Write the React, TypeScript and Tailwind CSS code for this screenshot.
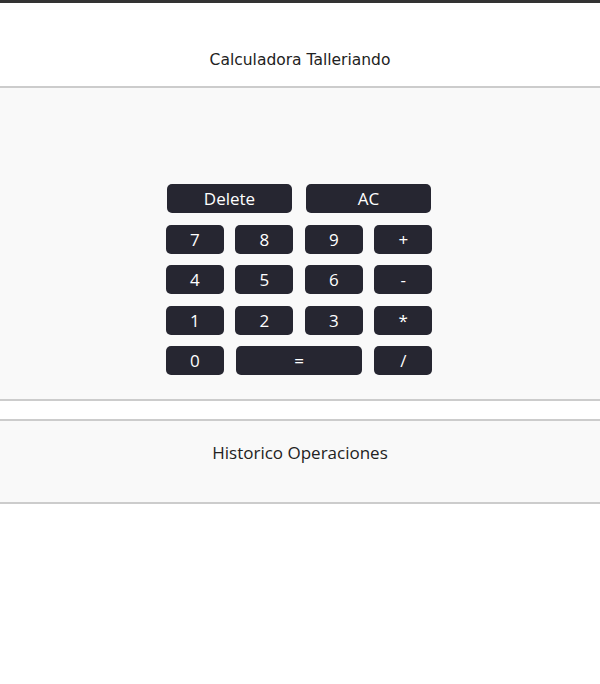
import React from "react";

type Key = {
  label: string;
  span?: boolean;
};

const keys: Key[] = [
  { label: "Delete", span: true },
  { label: "AC", span: true },
  { label: "7" },
  { label: "8" },
  { label: "9" },
  { label: "+" },
  { label: "4" },
  { label: "5" },
  { label: "6" },
  { label: "-" },
  { label: "1" },
  { label: "2" },
  { label: "3" },
  { label: "*" },
  { label: "0" },
  { label: "=", span: true },
  { label: "/" },
];

const App = () => {
  return (
    <div className="min-h-screen w-full bg-white text-[#222]">
      {/* top strip */}
      <div className="h-[3px] bg-[#333333]" />

      <header className="h-[85px] flex justify-center items-end pb-[14px] border-b-2 border-[#cccccc]">
        <h1 className="text-[15.5px] leading-[24px] font-['DejaVu_Sans',sans-serif]">
          Calculadora Talleriando
        </h1>
      </header>

      {/* calculator */}
      <section className="h-[313px] bg-[#f9f9f9] border-b-2 border-[#cccccc] pt-[96px] flex justify-center">
        <div className="grid grid-cols-[58px_58px_58px_58px] gap-x-[11.5px] gap-y-[11.5px] h-fit mr-[2px] font-['Open_Sans',sans-serif]">
          {keys.map((key) => {
            return (
              <button
                key={key.label}
                className={`h-[29px] rounded-[5px] bg-[#262631] text-white text-[17px] leading-none flex items-center justify-center ${
                  key.span ? "col-span-2 mx-[1px]" : ""
                }`}
              >
                {key.label}
              </button>
            );
          })}
        </div>
      </section>

      <div className="h-[18px]" />

      {/* history */}
      <section className="h-[85px] bg-[#f9f9f9] border-y-2 border-[#cccccc] flex justify-center pt-[19px]">
        <h2 className="text-[17px] leading-[26px] font-['Open_Sans',sans-serif] h-fit">
          Historico Operaciones
        </h2>
      </section>
    </div>
  );
};

export default App;
